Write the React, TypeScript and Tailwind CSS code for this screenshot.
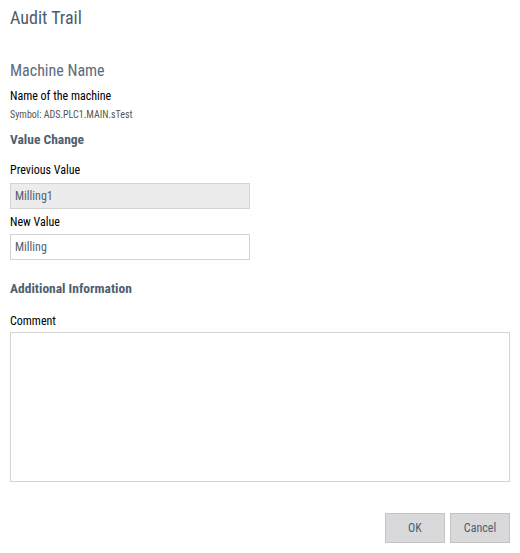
import React from 'react';

export default function App() {
  return (
    <div className="relative h-[553px] w-[520px] bg-white font-['Roboto_Condensed','Roboto',sans-serif] font-stretch-condensed text-[#222]">
      <div className="px-[10px] pt-[6px]">
        {/* Title */}
        <h1 className="text-[18px] leading-[24px] text-[#4d5c6c]">Audit Trail</h1>

        {/* Machine */}
        <h2 className="mt-[30px] text-[16px] leading-[22px] text-[#5b6b7c]">Machine Name</h2>
        <div className="mt-[6px] text-[12px] leading-[16px] text-black">Name of the machine</div>
        <div className="mt-[5px] text-[10px] leading-[12px] text-[#555]">Symbol: ADS.PLC1.MAIN.sTest</div>

        {/* Value change */}
        <h3 className="mt-[9px] text-[13.5px] font-bold leading-[18px] text-[#4f5f70]">Value Change</h3>
        <div className="mt-[14px] text-[12px] leading-[16px] text-black">Previous Value</div>
        <div className="mt-[5px] flex h-[26px] w-[240px] items-center border border-[#d4d4d4] bg-[#ececec] px-[4px] text-[12px] text-[#4f6070]">
          Milling1
        </div>
        <div className="mt-[5px] text-[12px] leading-[16px] text-black">New Value</div>
        <div className="mt-[4px] flex h-[26px] w-[240px] items-center border border-[#d4d4d4] bg-white px-[4px] text-[12px] text-[#4f6070]">
          Milling
        </div>

        {/* Additional */}
        <h3 className="mt-[19px] text-[13.5px] font-bold leading-[18px] text-[#4f5f70]">Additional Information</h3>
        <div className="mt-[16px] text-[12px] leading-[16px] text-black">Comment</div>
        <textarea className="mt-[3px] block h-[150px] w-[500px] resize-none border border-[#d4d4d4] bg-white outline-none" />

        {/* Buttons */}
        <div className="mt-[31px] flex justify-end gap-[5px]">
          <button className="h-[30px] w-[60px] border border-[#c4c4c4] bg-[#d9d9dc] text-[12px] text-[#4f6070]">OK</button>
          <button className="h-[30px] w-[60px] border border-[#c4c4c4] bg-[#d9d9dc] text-[12px] text-[#4f6070]">Cancel</button>
        </div>
      </div>
    </div>
  );
}
